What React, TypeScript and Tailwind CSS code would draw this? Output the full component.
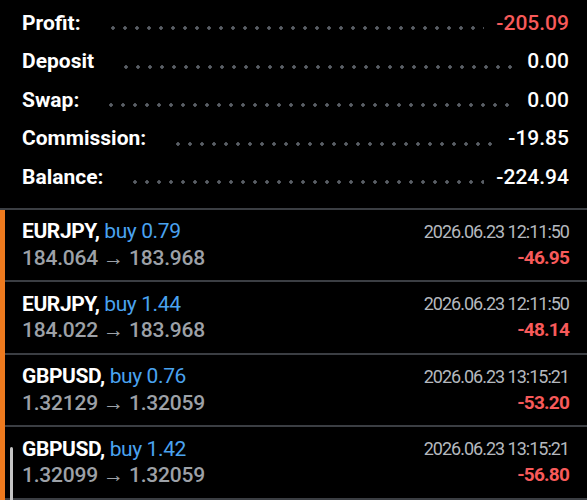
const SUMMARY = [
  { label: "Profit:", value: "-205.09", red: true },
  { label: "Deposit", value: "0.00" },
  { label: "Swap:", value: "0.00" },
  { label: "Commission:", value: "-19.85" },
  { label: "Balance:", value: "-224.94" },
];

const TRADES = [
  { symbol: "EURJPY", lots: "0.79", open: "184.064", close: "183.968", time: "2026.06.23 12:11:50", profit: "-46.95" },
  { symbol: "EURJPY", lots: "1.44", open: "184.022", close: "183.968", time: "2026.06.23 12:11:50", profit: "-48.14" },
  { symbol: "GBPUSD", lots: "0.76", open: "1.32129", close: "1.32059", time: "2026.06.23 13:15:21", profit: "-53.20" },
  { symbol: "GBPUSD", lots: "1.42", open: "1.32099", close: "1.32059", time: "2026.06.23 13:15:21", profit: "-56.80" },
];

function SummaryRow({ label, value, red }: { label: string; value: string; red?: boolean }) {
  return (
    <div className="flex h-[38.5px] items-center">
      <span className="text-[21px] font-bold text-white">{label}</span>
      {/* dotted leader between label and amount */}
      <span className="ml-[26px] mr-[12px] mt-[10px] h-[6px] flex-1 bg-[radial-gradient(circle,#5a5f66_1.5px,transparent_2px)] bg-[length:12px_6px] bg-repeat-x" />
      <span className={["text-[21px] font-medium", red ? "text-[#f75a5a]" : "text-white"].join(" ")}>
        {value}
      </span>
    </div>
  );
}

function TradeRow({ t }: { t: (typeof TRADES)[number] }) {
  return (
    <div className="flex h-[72.5px] items-center border-b-2 border-[#3b3e43] pl-[17px] pr-[18px]">
      <div className="flex flex-1 flex-col leading-[26.5px]">
        <div className="text-[21px] tracking-[-0.4px]">
          <span className="font-bold text-white">{t.symbol},</span>{" "}
          <span className="text-[#4aa3f0]">buy {t.lots}</span>
        </div>
        <div className="text-[21px] font-medium tracking-[-0.2px] text-[#9da1a7]">
          {t.open} <span className="font-normal">→</span> {t.close}
        </div>
      </div>
      <div className="flex flex-col items-end leading-[26px]">
        <span className="text-[18px] tracking-[-1px] text-[#b4b8be]">{t.time}</span>
        <span className="text-[19px] font-bold tracking-[-0.8px] text-[#f75a5a]">{t.profit}</span>
      </div>
    </div>
  );
}

export default function App() {
  return (
    <div className="relative h-[500px] w-[587px] overflow-hidden bg-black font-['Roboto',sans-serif]">
      <div className="px-[22px] pr-[18px] pb-[11px] pt-[4px]">
        {SUMMARY.map((s) => (
          <SummaryRow key={s.label} {...s} />
        ))}
      </div>
      <div className="h-[2px] bg-[#3b3e43]" />
      <div className="flex">
        <div className="w-[5px] shrink-0 bg-[#ee7a1e]" />
        <div className="flex-1">
          {TRADES.map((t, i) => (
            <TradeRow key={i} t={t} />
          ))}
        </div>
      </div>
      {/* scroll indicator */}
      <div className="absolute left-[10px] top-[447px] h-[60px] w-[3px] rounded-full bg-[#c4c4c4]" />
    </div>
  );
}
